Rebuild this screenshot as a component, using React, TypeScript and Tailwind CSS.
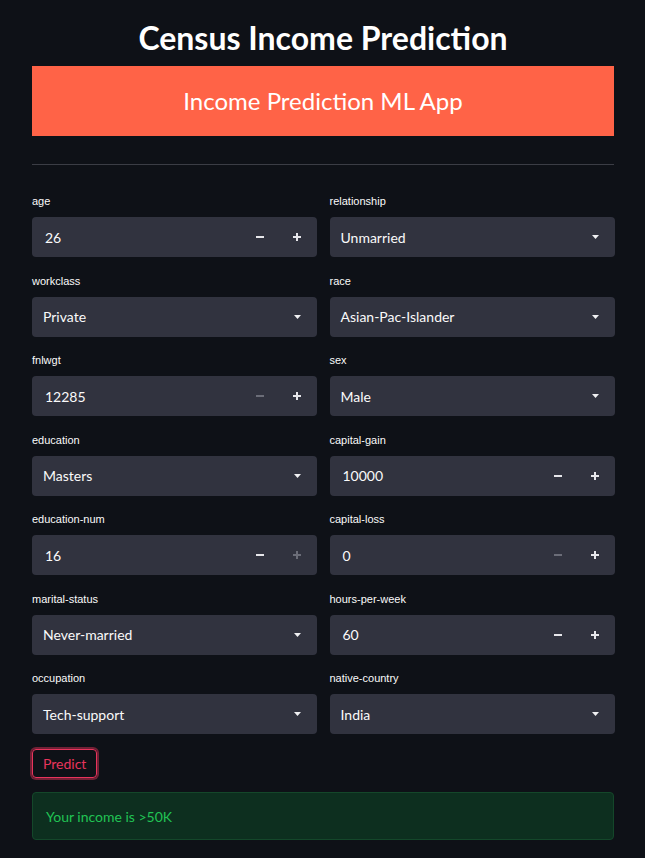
import React from 'react';

const sans = { fontFamily: 'Lato, "Noto Sans", sans-serif' };

type Field =
  | { kind: 'number'; label: string; value: string; minusOff?: boolean; plusOff?: boolean }
  | { kind: 'select'; label: string; value: string };

const left: Field[] = [
  { kind: 'number', label: 'age', value: '26' },
  { kind: 'select', label: 'workclass', value: 'Private' },
  { kind: 'number', label: 'fnlwgt', value: '12285', minusOff: true },
  { kind: 'select', label: 'education', value: 'Masters' },
  { kind: 'number', label: 'education-num', value: '16', plusOff: true },
  { kind: 'select', label: 'marital-status', value: 'Never-married' },
  { kind: 'select', label: 'occupation', value: 'Tech-support' },
];

const right: Field[] = [
  { kind: 'select', label: 'relationship', value: 'Unmarried' },
  { kind: 'select', label: 'race', value: 'Asian-Pac-Islander' },
  { kind: 'select', label: 'sex', value: 'Male' },
  { kind: 'number', label: 'capital-gain', value: '10000' },
  { kind: 'number', label: 'capital-loss', value: '0', minusOff: true },
  { kind: 'number', label: 'hours-per-week', value: '60' },
  { kind: 'select', label: 'native-country', value: 'India' },
];

function Minus({ off }: { off?: boolean }) {
  return <span className={`block w-[8px] h-[2px] ${off ? 'bg-[#6b6d78]' : 'bg-[#e6e6ea]'}`} />;
}

function PlusIcon({ off }: { off?: boolean }) {
  return (
    <svg width="8" height="8" viewBox="0 0 8 8">
      <path d="M3 0h2v3h3v2H5v3H3V5H0V3h3z" fill={off ? '#6b6d78' : '#e6e6ea'} />
    </svg>
  );
}

function FieldBox({ f }: { f: Field }) {
  return (
    <div className="flex flex-col">
      <label className="h-[16px] text-[11px] leading-[16px] text-[#fafafa] mb-[8px]" style={{ fontFamily: '"Liberation Sans", Arial, sans-serif' }}>
        {f.label}
      </label>
      {f.kind === 'number' ? (
        <div className="h-[40px] rounded-[4px] bg-[#31333f] flex items-center">
          <span className="flex-1 pl-[13px] text-[14px] text-[#fafafa]" style={sans}>{f.value}</span>
          <span className="w-[37px] h-full flex items-center justify-center"><Minus off={f.minusOff} /></span>
          <span className="w-[37px] h-full flex items-center justify-center mr-[1px]"><PlusIcon off={f.plusOff} /></span>
        </div>
      ) : (
        <div className="h-[40px] rounded-[4px] bg-[#31333f] flex items-center pl-[11px] pr-[16px]">
          <span className="flex-1 text-[14px] text-[#fafafa]" style={sans}>{f.value}</span>
          <svg width="7" height="4" viewBox="0 0 7 4">
            <path d="M0 0h7L3.5 4z" fill="#f0f0f2" />
          </svg>
        </div>
      )}
    </div>
  );
}

export default function App() {
  return (
    <div className="min-h-screen bg-[#0e1117] overflow-hidden" style={sans}>
      <div className="w-[582px] ml-[32px] pt-[16px]">
        <h1 className="h-[44px] text-center text-[32px] leading-[44px] font-bold text-white">
          Census Income Prediction
        </h1>
        <div className="mt-[6px] h-[70px] bg-[#ff6347] flex items-center justify-center">
          <span className="text-[24px] text-white">Income Prediction ML App</span>
        </div>
        <div className="mt-[28px] h-[1px] bg-[#3b3d45]" />
        <div className="mt-[28px] grid grid-cols-2 gap-x-[13px]">
          <div className="flex flex-col gap-[15.5px]">
            {left.map((f) => <FieldBox key={f.label} f={f} />)}
          </div>
          <div className="flex flex-col gap-[15.5px] w-[285px]">
            {right.map((f) => <FieldBox key={f.label} f={f} />)}
          </div>
        </div>
        <button className="mt-[15px] h-[29px] px-[10px] rounded-[4px] border border-[#e8345c] text-[#e8345c] text-[14px] shadow-[0_0_0_2px_rgba(232,52,92,0.45)]">
          Predict
        </button>
        <div className="mt-[14px] h-[48px] rounded-[4px] bg-[#0d2f1f] border border-[#14472a] flex items-center pl-[13px] text-[14px] text-[#21c354]">
          Your income is &gt;50K
        </div>
      </div>
    </div>
  );
}
